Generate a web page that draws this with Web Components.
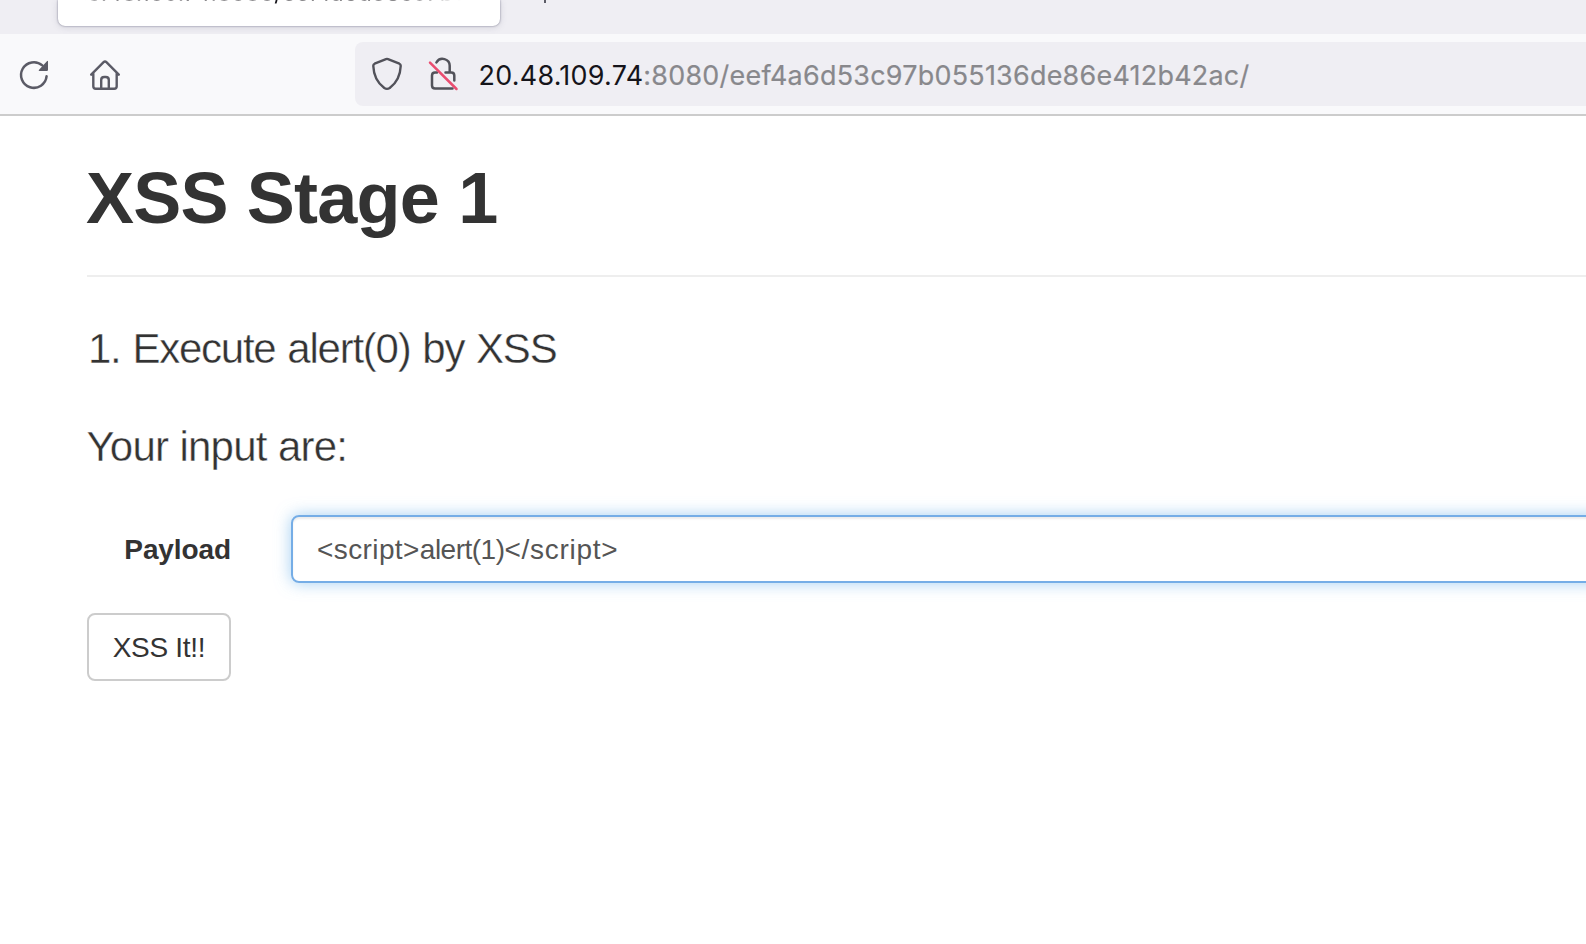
<!DOCTYPE html>
<html lang="en"><head><meta charset="utf-8"><title>XSS Stage 1</title>
<style>html,body{margin:0;height:100%;overflow:hidden;background:#fff}body{font-family:"Liberation Sans",Arial,sans-serif;color:#333}</style></head>
<body>
<browser-window>
  <tab-strip slot="chrome">20.48.109.74:8080<b>/</b>eef4a6d53c97b0</tab-strip>
  <nav-bar slot="chrome"></nav-bar>
  <stage-page></stage-page>
</browser-window>
<script>
const define=(name,html)=>{
  const t=document.createElement('template');t.innerHTML=html;
  customElements.define(name,class extends HTMLElement{
    constructor(){super();this.attachShadow({mode:'open'}).append(t.content.cloneNode(true));}
  });
};
define('browser-window',`<style>
:host{display:flex;flex-direction:column;width:100vw;height:100vh;overflow:hidden}
</style><slot name="chrome"></slot><slot></slot>`);
define('tab-strip',`<style>
:host{display:flex;align-items:flex-start;height:34px;flex:none;background:#efeef3;overflow:hidden}
.tab{box-sizing:border-box;width:442px;height:26px;margin-left:58px;padding-left:15px;background:#fff;border-radius:0 0 7px 7px;box-shadow:0 0 2px rgba(40,40,70,.6),0 1px 7px rgba(90,90,120,.2);font:22.5px/26px Inter,sans-serif;color:rgba(21,20,26,.5)}
.t{display:block;width:400px;margin-top:-20px;white-space:nowrap;letter-spacing:.2px;-webkit-mask-image:linear-gradient(90deg,transparent 3%,#000 6%,#000 84%,transparent 97%);mask-image:linear-gradient(90deg,transparent 3%,#000 6%,#000 84%,transparent 97%)}
::slotted(b){font-weight:400;color:#15141a}
.plus{width:2px;height:3px;margin-left:44px;background:#5b5b66}
</style><div class="tab"><span class="t"><slot></slot></span></div><i class="plus"></i>`);
define('reload-icon',`<style>:host{display:block;width:32px;height:32px}svg{display:block}</style>
<svg width="32" height="32" viewBox="0 0 32 32"><path d="M28.6 17.2A12.8 12.8 0 1 1 24.3 6.4" fill="none" stroke="#5b5b66" stroke-width="2.5" stroke-linecap="round"/><path d="M30 2.2v8.6q0 1.2-1.2 1.2h-7.2q-1.7 0-.5-1.2l7.8-8.6q1.1-1 1.1 0z" fill="#5b5b66"/></svg>`);
define('home-icon',`<style>:host{display:block;width:32px;height:32px}svg{display:block}</style>
<svg width="32" height="32" viewBox="0 0 32 32" fill="none" stroke="#5b5b66" stroke-width="2.4" stroke-linecap="round" stroke-linejoin="round"><path d="M2.2 15.7L14.6 3.2q1.4-1.4 2.8 0L29.8 15.7M4.3 14v13.3q0 2.5 2.5 2.5h18.4q2.5 0 2.5-2.5V14M12.2 29.5V21q0-3 3-3h1.6q3 0 3 3v8.5"/></svg>`);
define('shield-icon',`<style>:host{display:block;width:32px;height:34px}svg{display:block}</style>
<svg width="32" height="34" viewBox="0 0 32 34"><path d="M15 2.1L3.6 6.7Q2.2 7.4 2.3 9c.3 8.7 3.5 16.4 11 22q2.7 1.8 5.4 0c7.5-5.6 10.7-13.3 11-22q.1-1.6-1.3-2.3L17 2.1q-1-.4-2 0z" fill="none" stroke="#52525a" stroke-width="2.4" stroke-linejoin="round"/></svg>`);
define('insecure-icon',`<style>:host{display:block;width:32px;height:34px}svg{display:block}</style>
<svg width="32" height="34" viewBox="0 0 32 34" fill="none" stroke-linecap="round"><path d="M8.4 5.5a7.1 7.1 0 0 1 13.3 3.7v6.2h1.6q3 0 3 3v5M17.5 15.4h4M9 15.4H7q-3 0-3 3V28.5q0 3 3 3h17.5" stroke="#52525a" stroke-width="2.5"/><path d="M2 5.7L28.5 32" stroke="#ea4d70" stroke-width="2.5"/></svg>`);
define('nav-bar',`<style>
:host{display:flex;align-items:center;box-sizing:border-box;height:82px;flex:none;background:#f9f9fb;border-bottom:2px solid #ccc;padding-left:18px}
home-icon{margin-left:39px}
reload-icon,home-icon{margin-top:1px}
.url{display:flex;align-items:center;flex:1;height:64px;margin-left:234px;padding-left:16px;border-radius:8px 0 0 8px;background:#efeef3}
shield-icon{margin-right:25px}
.addr{margin-left:18.5px;padding-top:2px;font:26.9px/62px Inter,sans-serif;color:#88888c;white-space:nowrap;letter-spacing:.27px;-webkit-text-stroke:.2px currentColor}
.addr b{font-weight:400;color:#15141a;-webkit-text-stroke:0}
</style><reload-icon></reload-icon><home-icon></home-icon><div class="url"><shield-icon></shield-icon><insecure-icon></insecure-icon><span class="addr"><b>20.48.109.74</b>:8080/eef4a6d53c97b055136de86e412b42ac/</span></div>`);
define('form-row',`<style>
:host{display:flex;align-items:center;height:68px}
label{width:144px;padding-top:1px;text-align:right;font-weight:700;font-size:28px;letter-spacing:-.1px}
.input{box-sizing:border-box;flex:1;height:68px;margin:0 -20px 0 60px;padding-left:24px;border:2px solid #75ade6;border-radius:8px;font-size:28px;line-height:66px;color:#555;box-shadow:inset 0 2px 2px rgba(0,0,0,.075),0 0 16px rgba(102,175,233,.6);letter-spacing:-.5px}
::slotted(.open){letter-spacing:.4px}::slotted(.close){letter-spacing:.7px}
</style><label><slot name="label"></slot></label><div class="input"><slot></slot></div>`);
define('push-button',`<style>
:host{display:block;box-sizing:border-box;width:144px;height:68px;margin-top:30px;border:2px solid #ccc;border-radius:8px;text-align:center;font-size:28px;line-height:65px;letter-spacing:-.3px;white-space:nowrap}
</style><slot></slot>`);
define('stage-page',`<style>
:host{display:block;flex:1;padding-left:87px;background:#fff}
h1{margin:0;height:161px;border-bottom:2px solid #eee;font-size:72px;line-height:80px;padding-top:42px;box-sizing:border-box;font-weight:700;letter-spacing:-.8px;text-indent:-1px}
p{margin:0;font-size:42px;line-height:46px;font-weight:400;-webkit-text-stroke:.4px #fff}
.a{margin-top:49px;letter-spacing:-1.25px;word-spacing:1.5px;text-indent:1px}
.b{margin-top:52px;letter-spacing:-.8px;word-spacing:.5px;text-indent:-.5px}
form-row{margin-top:45px}
</style><h1>XSS Stage 1</h1><p class="a">1. Execute alert(0) by XSS</p><p class="b">Your input are:</p>
<form-row><span slot="label">Payload</span><span class="open">&lt;script&gt;</span>alert(1)<span class="close">&lt;/script&gt;</span></form-row><push-button>XSS It!!</push-button>`);
</script></body></html>
